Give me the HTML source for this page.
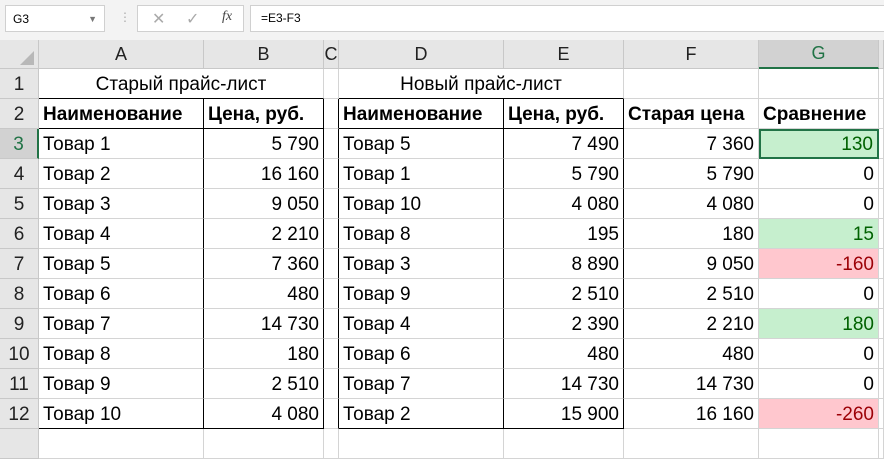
<!DOCTYPE html>
<html><head><meta charset="utf-8"><style>
body{margin:0;width:884px;height:433px;overflow:hidden;background:#fff;font-family:"Liberation Sans",sans-serif;position:relative}
.bar{position:absolute;left:0;top:0;width:884px;height:40px;background:#f3f3f3}
.nb{position:absolute;left:5px;top:5px;width:100px;height:27px;background:#fff;border:1px solid #d0d0d0;font-size:12px;line-height:27px;padding-left:7px;box-sizing:border-box}
.nb span{position:absolute;right:7px;top:0;color:#777;font-size:9px}
.fx{position:absolute;left:137px;top:5px;width:107px;height:27px;background:#fff;border:1px solid #d0d0d0;box-sizing:border-box;color:#aaa;font-size:16px}
.fb{position:absolute;left:250px;top:5px;width:640px;height:27px;background:#fff;border:1px solid #d0d0d0;box-sizing:border-box;font-size:12px;line-height:25px;padding-left:10px}
table{position:absolute;left:0;top:40px;border-collapse:separate;border-spacing:0;table-layout:fixed;width:884px;font-size:19px}
td{border-right:1px solid #d4d4d4;border-bottom:1px solid #d4d4d4;padding:2px 4px 0;height:30px;white-space:nowrap;overflow:hidden;box-sizing:border-box}
tr.h td{background:#e6e6e6;text-align:center;color:#222;height:29px;border-color:#c8c8c8;font-size:18px;padding-top:0}
td.rh{background:#e6e6e6;text-align:center;padding:2px 0 0;border-color:#c8c8c8;color:#222}
.r{text-align:right}
.c{text-align:center}
.b{font-weight:bold}
.R{border-right-color:#000}
.B{border-bottom-color:#000}
.g{background:#c6efce;color:#006100}
.p{background:#ffc7ce;color:#9c0006}
</style></head><body>
<div class="bar">
<div class="nb">G3<span>▼</span></div>
<div style="position:absolute;left:119px;top:10px;color:#aaa;font-size:12px">⋮</div>
<div class="fx"><span style="position:absolute;left:14px;top:3px">✕</span><span style="position:absolute;left:48px;top:3px">✓</span><span style="position:absolute;left:84px;top:3px;color:#444;font-style:italic;font-family:'Liberation Serif',serif;font-size:14px">fx</span></div>
<div class="fb">=E3-F3</div>
</div>
<table>
<colgroup><col style="width:39px"><col style="width:165px"><col style="width:120px"><col style="width:15px"><col style="width:165px"><col style="width:120px"><col style="width:135px"><col style="width:120px"><col style="width:5px"></colgroup>
<tr class="h"><td style="padding:0"><div style="width:0;height:0;border-left:14px solid transparent;border-bottom:14px solid #b8b8b8;margin-left:20px;margin-top:8px"></div></td><td>A</td><td>B</td><td style="padding:0">C</td><td>D</td><td>E</td><td>F</td><td style="background:#d2d2d2;color:#217346;border-bottom:2px solid #217346">G</td><td></td></tr>
<tr><td class="rh">1</td><td colspan="2" class="c B">Старый прайс-лист</td><td></td><td colspan="2" class="c B">Новый прайс-лист</td><td></td><td></td><td></td></tr>
<tr><td class="rh R">2</td><td class="b R B">Наименование</td><td class="b B R">Цена, руб.</td><td class="R"></td><td class="b R B">Наименование</td><td class="b B R">Цена, руб.</td><td class="b">Старая цена</td><td class="b">Сравнение</td><td></td></tr>
<tr><td class="rh R" style="background:#d2d2d2;color:#217346;border-right:2px solid #217346">3</td><td class="R">Товар 1</td><td class="r R">5 790</td><td class="R"></td><td class="R">Товар 5</td><td class="r R">7 490</td><td class="r">7 360</td><td class="r g" style="border:2px solid #217346">130</td><td></td></tr>
<tr><td class="rh R">4</td><td class="R">Товар 2</td><td class="r R">16 160</td><td class="R"></td><td class="R">Товар 1</td><td class="r R">5 790</td><td class="r">5 790</td><td class="r">0</td><td></td></tr>
<tr><td class="rh R">5</td><td class="R">Товар 3</td><td class="r R">9 050</td><td class="R"></td><td class="R">Товар 10</td><td class="r R">4 080</td><td class="r">4 080</td><td class="r">0</td><td></td></tr>
<tr><td class="rh R">6</td><td class="R">Товар 4</td><td class="r R">2 210</td><td class="R"></td><td class="R">Товар 8</td><td class="r R">195</td><td class="r">180</td><td class="r g">15</td><td></td></tr>
<tr><td class="rh R">7</td><td class="R">Товар 5</td><td class="r R">7 360</td><td class="R"></td><td class="R">Товар 3</td><td class="r R">8 890</td><td class="r">9 050</td><td class="r p">-160</td><td></td></tr>
<tr><td class="rh R">8</td><td class="R">Товар 6</td><td class="r R">480</td><td class="R"></td><td class="R">Товар 9</td><td class="r R">2 510</td><td class="r">2 510</td><td class="r">0</td><td></td></tr>
<tr><td class="rh R">9</td><td class="R">Товар 7</td><td class="r R">14 730</td><td class="R"></td><td class="R">Товар 4</td><td class="r R">2 390</td><td class="r">2 210</td><td class="r g">180</td><td></td></tr>
<tr><td class="rh R">10</td><td class="R">Товар 8</td><td class="r R">180</td><td class="R"></td><td class="R">Товар 6</td><td class="r R">480</td><td class="r">480</td><td class="r">0</td><td></td></tr>
<tr><td class="rh R">11</td><td class="R">Товар 9</td><td class="r R">2 510</td><td class="R"></td><td class="R">Товар 7</td><td class="r R">14 730</td><td class="r">14 730</td><td class="r">0</td><td></td></tr>
<tr><td class="rh R">12</td><td class="R B">Товар 10</td><td class="r R B">4 080</td><td class="R"></td><td class="R B">Товар 2</td><td class="r R B">15 900</td><td class="r">16 160</td><td class="r p">-260</td><td></td></tr>
<tr><td class="rh"></td><td></td><td></td><td></td><td></td><td></td><td></td><td></td><td></td></tr>
</table>
</body></html>
